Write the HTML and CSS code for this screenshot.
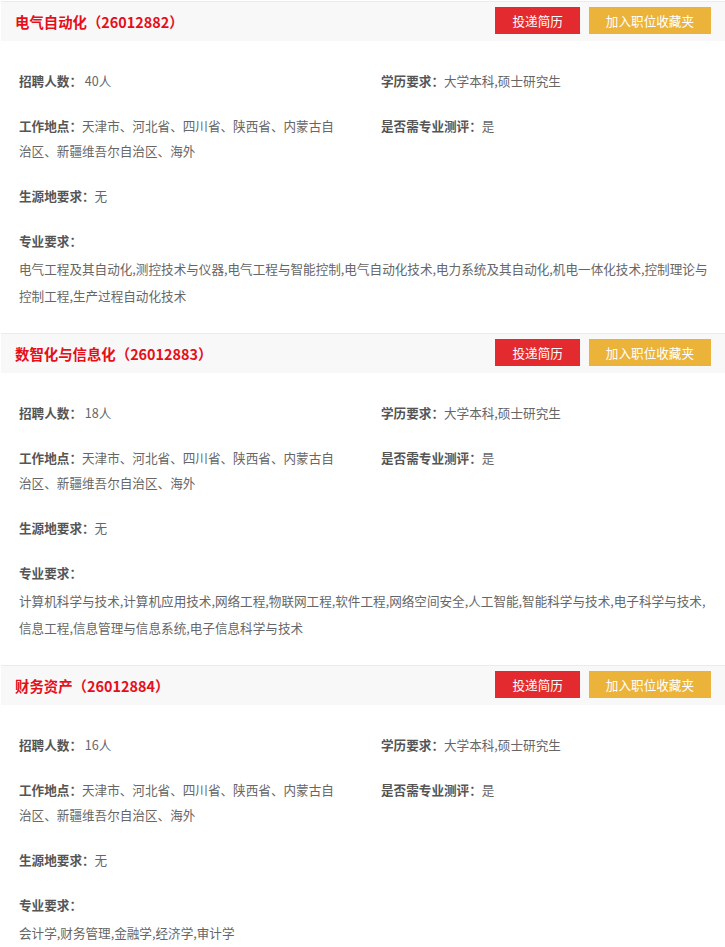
FILE: index.html
```html
<!DOCTYPE html>
<html lang="zh-CN">
<head>
  <meta charset="UTF-8">
  <meta name="viewport" content="width=device-width, initial-scale=1.0">
  <title>职位列表</title>
  <link rel="stylesheet" href="styles.css">
</head>
<body>
  <div class="job-list">
    <div class="job">
      <div class="job-head">
        <h3 class="job-title">电气自动化（26012882）</h3>
        <div class="btn-group">
          <a class="btn btn-red">投递简历</a>
          <a class="btn btn-yellow">加入职位收藏夹</a>
        </div>
      </div>
      <div class="job-body">
        <ul class="job-info">
          <li><b>招聘人数：</b>&nbsp;40人</li>
          <li><b>学历要求：</b>大学本科,硕士研究生</li>
          <li><b>工作地点：</b>天津市、河北省、四川省、陕西省、内蒙古自治区、新疆维吾尔自治区、海外</li>
          <li><b>是否需专业测评：</b>是</li>
          <li><b>生源地要求：</b>无</li>
        </ul>
        <div class="job-major">
          <b>专业要求：</b>
          <p>电气工程及其自动化,测控技术与仪器,电气工程与智能控制,电气自动化技术,电力系统及其自动化,机电一体化技术,控制理论与控制工程,生产过程自动化技术</p>
        </div>
      </div>
    </div>

    <div class="job">
      <div class="job-head">
        <h3 class="job-title">数智化与信息化（26012883）</h3>
        <div class="btn-group">
          <a class="btn btn-red">投递简历</a>
          <a class="btn btn-yellow">加入职位收藏夹</a>
        </div>
      </div>
      <div class="job-body">
        <ul class="job-info">
          <li><b>招聘人数：</b>&nbsp;18人</li>
          <li><b>学历要求：</b>大学本科,硕士研究生</li>
          <li><b>工作地点：</b>天津市、河北省、四川省、陕西省、内蒙古自治区、新疆维吾尔自治区、海外</li>
          <li><b>是否需专业测评：</b>是</li>
          <li><b>生源地要求：</b>无</li>
        </ul>
        <div class="job-major">
          <b>专业要求：</b>
          <p>计算机科学与技术,计算机应用技术,网络工程,物联网工程,软件工程,网络空间安全,人工智能,智能科学与技术,电子科学与技术,信息工程,信息管理与信息系统,电子信息科学与技术</p>
        </div>
      </div>
    </div>

    <div class="job">
      <div class="job-head">
        <h3 class="job-title">财务资产（26012884）</h3>
        <div class="btn-group">
          <a class="btn btn-red">投递简历</a>
          <a class="btn btn-yellow">加入职位收藏夹</a>
        </div>
      </div>
      <div class="job-body">
        <ul class="job-info">
          <li><b>招聘人数：</b>&nbsp;16人</li>
          <li><b>学历要求：</b>大学本科,硕士研究生</li>
          <li><b>工作地点：</b>天津市、河北省、四川省、陕西省、内蒙古自治区、新疆维吾尔自治区、海外</li>
          <li><b>是否需专业测评：</b>是</li>
          <li><b>生源地要求：</b>无</li>
        </ul>
        <div class="job-major">
          <b>专业要求：</b>
          <p>会计学,财务管理,金融学,经济学,审计学</p>
        </div>
      </div>
    </div>
  </div>
</body>
</html>
```

FILE: styles.css
```css
body {
  margin: 1px 0 0 1px;
  font-family: "Noto Sans CJK SC", "Liberation Sans", sans-serif;
  font-size: 12.6px;
  color: #666;
  background-color: white;
}
.job-head {
  display: flex;
  justify-content: space-between;
  align-items: center;
  height: 39px;
  padding: 0 14px 0 14px;
  border-top: 1px solid #ebebeb;
  background-color: #f8f8f8;
}
.job-title {
  margin: 0;
  font-size: 14.4px;
  font-weight: bold;
  color: #e50f1a;
}
.btn-group {
  display: flex;
  gap: 9px;
  align-self: flex-start;
  margin-top: 5px;
}
.btn {
  display: block;
  height: 27px;
  line-height: 27px;
  padding: 0 17px;
  color: white;
  font-size: 12.6px;
  cursor: pointer;
}
.btn-red {
  background-color: #e32b2f;
}
.btn-yellow {
  background-color: #ebb33a;
}
.job-body {
  padding: 27px 15px 24px 18px;
}
.job-info {
  margin: 0;
  padding: 0;
  list-style: none;
  display: grid;
  grid-template-columns: 320px 1fr;
  column-gap: 42px;
  row-gap: 20px;
  line-height: 25px;
}
.job-info li:last-child {
  grid-column: 1 / 3;
}
.job-info b,
.job-major b {
  color: #555;
}
.job-major {
  margin-top: 20px;
  line-height: 25px;
}
.job-major p {
  margin: 2px 0 0;
  line-height: 27px;
}
```
